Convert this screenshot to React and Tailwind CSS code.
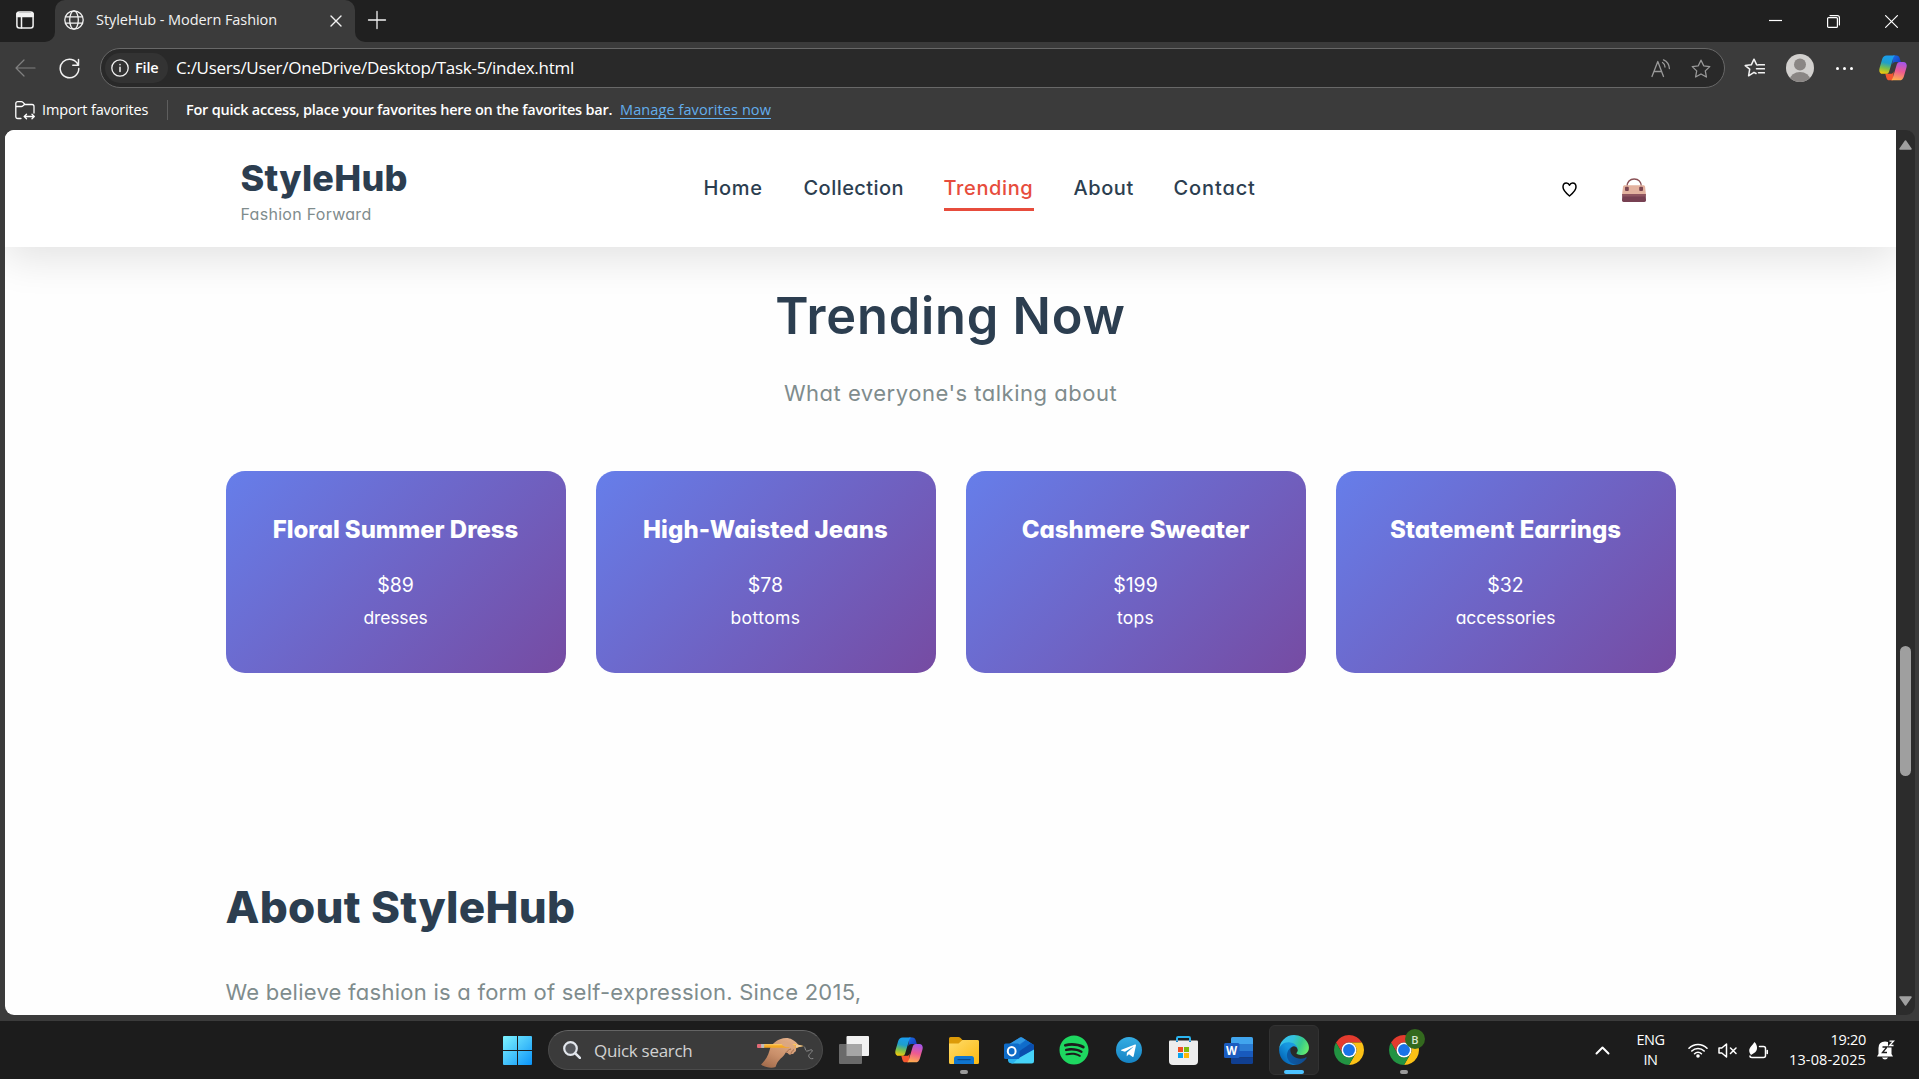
import React from "react";
import { FaSpotify } from "react-icons/fa";

const navLinks = [
  { label: "Home", cls: "w-[60px] tracking-[0.034em]" },
  { label: "Collection", cls: "w-[100px] tracking-[0.0225em]" },
  { label: "Trending", cls: "w-[90px] tracking-[0.031em]", active: true },
  { label: "About", cls: "w-[60px] tracking-[0.028em]" },
  { label: "Contact", cls: "w-[84px] tracking-[0.044em]" },
];

const trending = [
  { name: "Floral Summer Dress", nameCls: "tracking-[-0.002em]", price: "$89", category: "dresses", catCls: "tracking-[-0.008em]" },
  { name: "High-Waisted Jeans", nameCls: "tracking-[0.004em]", price: "$78", category: "bottoms", catCls: "tracking-[0.024em]" },
  { name: "Cashmere Sweater", nameCls: "tracking-[0.001em]", price: "$199", category: "tops", catCls: "tracking-[0.015em]" },
  { name: "Statement Earrings", nameCls: "tracking-[0em]", price: "$32", category: "accessories", catCls: "tracking-[-0.004em]" },
];

function Line({ w, h, vb, sw = 1.3, className = "", children }) {
  return (
    <svg width={w} height={h} viewBox={vb || `0 0 ${w} ${h}`} fill="none" stroke="currentColor" strokeWidth={sw} strokeLinecap="round" strokeLinejoin="round" className={`shrink-0 ${className}`}>
      {children}
    </svg>
  );
}

const STAR = "M10 1.2l2.7 5.6 6.1.8-4.5 4.3 1.1 6.1-5.4-3-5.4 3 1.1-6.1L1.2 7.6l6.1-.8z";

function Copilot({ id, size }) {
  return (
    <svg width={size} height={size * 0.92} viewBox="0 0 28 26" className="shrink-0">
      <defs>
        <linearGradient id={`${id}a`} x1="0.5" y1="0" x2="0.3" y2="1">
          <stop offset="0" stopColor="#1a9df0" />
          <stop offset="0.4" stopColor="#1f9fcb" />
          <stop offset="0.7" stopColor="#7cc04a" />
          <stop offset="1" stopColor="#f6c80a" />
        </linearGradient>
        <linearGradient id={`${id}b`} x1="0.6" y1="0" x2="0.4" y2="1">
          <stop offset="0" stopColor="#a355ea" />
          <stop offset="0.5" stopColor="#ee5a90" />
          <stop offset="1" stopColor="#ffae4d" />
        </linearGradient>
        <linearGradient id={`${id}c`} x1="0" y1="0" x2="1" y2="1">
          <stop offset="0" stopColor="#1b6fe8" />
          <stop offset="1" stopColor="#1535b8" />
        </linearGradient>
      </defs>
      <path d="M14 0.4h3.6c1.7 0 2.6 1 3.1 2.6l1.2 4.1h-5.4c-1.8 0-2.6.8-3.2 2.6z" fill={`url(#${id}c)`} />
      <path d="M14 25.6h-3.6c-1.7 0-2.6-1-3.1-2.6L6.2 18.9h5.3c1.8 0 2.6-.8 3.2-2.600z" fill="#f4562f" />
      <path d="M7.6 0.4h9.2c-1.6.2-2.2 1.4-2.7 3l-3.9 13c-.6 1.9-1.5 2.6-3.2 2.6H3.6C.6 19-.4 16.4.4 13.4l2.7-9.3C3.9 1.6 5.2.4 7.6.4z" fill={`url(#${id}a)`} />
      <path d="M20.4 25.6h-9.2c1.6-.2 2.2-1.4 2.7-3l3.9-13c.6-1.9 1.5-2.6 3.2-2.6h3.4c3 0 4 2.6 3.2 5.6l-2.7 9.3c-.8 2.5-2.1 3.7-4.5 3.7z" fill={`url(#${id}b)`} />
    </svg>
  );
}

function Handbag() {
  return (
    <svg width="24" height="24" viewBox="0 0 24 24">
      <path d="M5 11V8.500C5 4 8 .9 12.200.9S19.300 4 19.300 8.500V11" fill="none" stroke="#8a5257" strokeWidth="1.5" />
      <path d="M2.800 7.200h18.500c1 0 1.700.6 1.800 1.500L24 17H0l1-8.300c.1-.9.800-1.500 1.800-1.500z" fill="#e3b29f" />
      <path d="M.4 16h23.200l.4 6.300c0 1-.6 1.700-1.600 1.700H1.600C.6 24 0 23.300 0 22.300z" fill="#774052" />
      <path d="M.4 16h23.200l.1 2.500H.3z" fill="#8f5560" />
      <rect x="3" y="8.700" width="3.800" height="4.300" rx="1" fill="#7a4450" />
      <rect x="17.200" y="8.700" width="3.800" height="4.300" rx="1" fill="#7a4450" />
    </svg>
  );
}

function WindowsLogo() {
  return (
    <svg width="29" height="29" viewBox="0 0 29 29" className="shrink-0">
      <defs>
        <linearGradient id="win" x1="0" y1="0" x2="29" y2="29" gradientUnits="userSpaceOnUse">
          <stop offset="0" stopColor="#7df3ff" />
          <stop offset="0.5" stopColor="#46c4fb" />
          <stop offset="1" stopColor="#0a93f8" />
        </linearGradient>
      </defs>
      <path d="M1 0h13v14H0V1q0-1 1-1zM15 0h13q1 0 1 1v13H15zM0 15h14v14H1q-1 0-1-1zM15 15h14v13q0 1-1 1H15z" fill="url(#win)" />
    </svg>
  );
}

function HandPencil() {
  return (
    <svg width="58" height="31" viewBox="0 0 58 31" className="shrink-0">
      <defs>
        <linearGradient id="hand" x1="0.8" y1="0" x2="0.2" y2="1">
          <stop offset="0" stopColor="#e3b08a" />
          <stop offset="0.6" stopColor="#c98f6a" />
          <stop offset="1" stopColor="#a46d4d" />
        </linearGradient>
      </defs>
      <path d="M4 27.500C8 24 11 19 12.500 13.500 14 7.500 18 4.500 23 2.300c4-1.800 9-1.800 12 .2 3 1.500 5 3.400 6.400 5.400 1 1.500-1 3-2.500 3.500.5 2 0 3.500-1.600 3.800-.3 1.400-1.500 2.200-2.800 1.700-1 1.300-3 1-3.600-.6l-2.200-.7c-1.700 4-4.700 5.300-7.200 8.300-1.500 1.800-2 3.600-3 6C15 31.500 8 30.500 4 27.500z" fill="url(#hand)" />
      <path d="M29.500 15.500c1-2 2.500-3 4.500-3.500M34 16.500c.5-1.500 1.500-3 3-4" stroke="#9a6546" strokeWidth="0.900" fill="none" />
      <path d="M3 7.300h36l7.500 1.600-7.500 1.900H3z" fill="#f5a824" />
      <path d="M3 7.300h36v1H3z" fill="#ffd06a" />
      <path d="M0 8q0-.9 1-.9h3.200v3.800H1q-1 0-1-.9z" fill="#e26a76" />
      <path d="M4.200 7.100h3v3.800h-3z" fill="#b9bcc4" />
      <path d="M39 7.300l7.500 1.600-7.500 1.900z" fill="#e8c9a0" />
      <path d="M24 5.500c5-2 11 .6 15 4.100-2 2.200-5 2-8 .4-2.500.8-6-1-7-4.500z" fill="#dca780" />
      <path d="M47 9.500c1.500 1 1 4 2.500 4.500 2 .6 4-2 5.500-1 1.800 1.500-3.500 3.500-3.300 6 .2 2 2.300 3.300 4.600 2.500" stroke="#8b8b8b" strokeWidth="1" fill="none" />
    </svg>
  );
}

function TaskView() {
  return (
    <svg width="30" height="28" viewBox="0 0 30 28">
      <rect x="7.500" y="0" width="22.500" height="20" rx="1" fill="#f1f1f1" />
      <rect x="0" y="8" width="23" height="20" rx="1" fill="#6a6a6a" />
      <path d="M7.500 8H23v12H7.500z" fill="#a5a5a5" />
    </svg>
  );
}

function Folder() {
  return (
    <svg width="30" height="27" viewBox="0 0 30 27">
      <defs>
        <linearGradient id="fold" x1="0" y1="0" x2="1" y2="1">
          <stop offset="0" stopColor="#ffdc6b" />
          <stop offset="1" stopColor="#fbb810" />
        </linearGradient>
      </defs>
      <path d="M0 1.500Q0 0 1.500 0h8q1 0 1.800.8L13.500 3H28q2 0 2 2v3H0z" fill="#dc9a08" />
      <path d="M0 6.500h9.500L13.500 3H28.500Q30 3 30 4.500v21q0 1.500-1.500 1.500h-27Q0 27 0 25.500z" fill="url(#fold)" />
      <path d="M5 27v-5.500Q5 19 7.500 19h15q2.500 0 2.500 2.500V27z" fill="#0f75cf" />
      <path d="M8.500 22.600h13" stroke="#084a8c" strokeWidth="1.200" />
    </svg>
  );
}

function Outlook() {
  return (
    <svg width="30" height="27" viewBox="0 0 30 27">
      <path d="M3 8.500L16 .5q1-.6 2 0L30 8v6L14 22H3z" fill="#1b74cf" />
      <path d="M3 8.500L16 .5q1-.6 2 0l4 2.500L8 12z" fill="#2f97e3" />
      <path d="M22 3l5.500 3.400L14 15v-4.500z" fill="#0f6ccb" />
      <path d="M27 6.200L30 8v5L14 22v-7z" fill="#0a4fae" />
      <path d="M30 12.500V24q0 2.500-2.500 2.500H9Q4.500 26 4 22l10-.5z" fill="#46d3f8" />
      <path d="M4 20l10 1.500L9 26.500H7.500Q4 26 4 23z" fill="#2bb3ef" />
      <rect x="0" y="6.500" width="15.500" height="15.500" rx="1.600" fill="#0f6cc8" />
      <ellipse cx="7.700" cy="14.200" rx="3.900" ry="4.200" fill="none" stroke="#fff" strokeWidth="2" />
    </svg>
  );
}

function Telegram() {
  return (
    <svg width="26" height="26" viewBox="0 0 24 24">
      <defs>
        <linearGradient id="tg" x1="0" y1="0" x2="0" y2="1">
          <stop offset="0" stopColor="#35ade3" />
          <stop offset="1" stopColor="#1583c4" />
        </linearGradient>
      </defs>
      <circle cx="12" cy="12" r="12" fill="url(#tg)" />
      <path d="M5 11.700L17.500 6.900c.6-.2 1.100.1.900 1l-2.100 9.900c-.15.7-.6.85-1.150.5l-3.200-2.300-1.500 1.400c-.2.2-.3.3-.6.3l.2-3.200 5.800-5.200c.25-.2-.05-.35-.4-.1L8.300 13.600l-3.200-1c-.6-.2-.65-.6-.1-.9z" fill="#fff" />
    </svg>
  );
}

function Store() {
  return (
    <svg width="29" height="29" viewBox="0 0 29 29">
      <path d="M8 6V2.200Q8 1 9.200 1h10.600Q21 1 21 2.200V6" fill="none" stroke="#2bb5f0" strokeWidth="2" />
      <path d="M0 5.500Q0 4.500 1 4.500h27q1 0 1 1V25q0 4-4 4H4q-4 0-4-4z" fill="#ededed" />
      <path d="M8 4.500V6M21 4.500V6" stroke="#1b83c4" strokeWidth="2" />
      <path d="M9 11h5v5H9z" fill="#f04f23" />
      <path d="M15 11h5v5h-5z" fill="#80ba0a" />
      <path d="M9 17h5v5H9z" fill="#08a3ee" />
      <path d="M15 17h5v5h-5z" fill="#fdb809" />
    </svg>
  );
}

function Word() {
  return (
    <span className="relative block h-[27px] w-[29px]">
      <svg width="29" height="27" viewBox="0 0 29 27">
        <path d="M7 1.500Q7 0 8.500 0h19Q29 0 29 1.500V7H7z" fill="#41a5ee" />
        <path d="M7 7h22v7H7z" fill="#2b7cd3" />
        <path d="M7 14h22v6.500H7z" fill="#185abd" />
        <path d="M7 20.500h22v5q0 1.500-1.500 1.500h-19Q7 27 7 25.500z" fill="#103f91" />
        <rect x="0" y="6" width="15.500" height="15" rx="1.500" fill="#1b5cc0" />
      </svg>
      <span className="absolute left-0 top-[6px] w-[15px] text-center text-[11.5px] font-bold leading-[15px] text-white">W</span>
    </span>
  );
}

function Edge() {
  return (
    <svg width="30" height="30" viewBox="4 4 257 257">
      <defs>
        <linearGradient id="e1" x1="0.2" y1="0.5" x2="1" y2="0.5">
          <stop offset="0" stopColor="#0c59a4" />
          <stop offset="1" stopColor="#114a8b" />
        </linearGradient>
        <linearGradient id="e2" x1="0.9" y1="0.2" x2="0.3" y2="0.9">
          <stop offset="0" stopColor="#1b9de2" />
          <stop offset="0.4" stopColor="#1595df" />
          <stop offset="1" stopColor="#0668b8" />
        </linearGradient>
        <linearGradient id="e3" x1="0" y1="0.3" x2="1" y2="0.6">
          <stop offset="0" stopColor="#35c1f1" />
          <stop offset="0.4" stopColor="#34c1dd" />
          <stop offset="0.7" stopColor="#36c98d" />
          <stop offset="1" stopColor="#66eb6e" />
        </linearGradient>
      </defs>
      <path fill="url(#e1)" d="M235.680 195.460a93.730 93.730 0 0 1-10.540 4.710 101.870 101.870 0 0 1-35.900 6.460c-47.320 0-88.540-32.550-88.540-74.320A31.480 31.480 0 0 1 117.130 105.020c-42.800 1.800-53.800 46.400-53.800 72.530 0 73.880 68.090 81.370 82.760 81.370 7.910 0 19.840-2.300 27-4.560l1.310-.44a128.340 128.340 0 0 0 66.600-52.800 4 4 0 0 0-5.320-5.660z" />
      <path fill="url(#e2)" d="M110.340 246.340A79.200 79.200 0 0 1 87.600 225a80.720 80.720 0 0 1 29.530-120c3.120-1.470 8.450-4.130 15.540-4a32.350 32.350 0 0 1 25.690 13 31.880 31.880 0 0 1 6.360 18.660c0-.21 24.460-79.600-80-79.600-43.900 0-80 41.660-80 78.210a130.150 130.150 0 0 0 12.110 56 128 128 0 0 0 156.380 67.110 75.550 75.550 0 0 1-62.780-8z" />
      <path fill="url(#e3)" d="M156.940 153.780c-.81 1.050-3.300 2.500-3.300 5.660 0 2.610 1.700 5.120 4.720 7.230 14.380 10 41.490 8.680 41.560 8.680a59.560 59.560 0 0 0 30.270-8.350A61.380 61.380 0 0 0 260.500 114c.26-22.410-8-37.310-11.340-43.910C227.950 28.760 182.350 5 132.720 5A128 128 0 0 0 4.720 131.200c.48-36.540 36.800-66.050 80-66.050 3.500 0 23.460.34 42 10.070 16.340 8.580 24.900 18.940 30.850 29.210 6.180 10.670 7.280 24.150 7.280 29.520s-2.740 13.330-7.910 19.830z" />
    </svg>
  );
}

function Chrome() {
  return (
    <svg width="30" height="30" viewBox="2 2 44 44">
      <path d="M4.950 13A22 22 0 0 1 43.050 13H24A11 11 0 0 0 14.470 29.500z" fill="#e33b2e" />
      <path d="M43.050 13A22 22 0 0 1 24 46L33.530 29.500A11 11 0 0 0 24 13z" fill="#fbc116" />
      <path d="M24 46A22 22 0 0 1 4.950 13L14.470 29.500A11 11 0 0 0 33.530 29.500z" fill="#229342" />
      <circle cx="24" cy="24" r="11" fill="#fff" />
      <circle cx="24" cy="24" r="8.700" fill="#1a73e8" />
    </svg>
  );
}

function Slot({ children, running, active }) {
  return (
    <div className="relative flex h-[58px] w-[55px] shrink-0 items-center justify-center">
      {active ? (
        <div className="flex h-[50px] w-[50px] items-center justify-center rounded-md border border-[#323232] bg-[#292929]">{children}</div>
      ) : (
        children
      )}
      {running && <span className="absolute bottom-[5px] left-1/2 h-1 w-2 -translate-x-1/2 rounded-full bg-[#9a9a9a]" />}
      {active && <span className="absolute bottom-[5px] left-1/2 h-1 w-5 -translate-x-1/2 rounded-full bg-[#4cc2ff]" />}
    </div>
  );
}

function TitleBar() {
  return (
    <div className="flex h-[42px] bg-[#202020] text-[#f2f2f2]">
      <div className="flex w-[55px] bg-[#3b3b3b]">
        <div className="flex w-full rounded-br-[10px] bg-[#202020] pl-4 pt-[11px]">
          <Line w={18} h={18} sw={1.5}>
            <rect x="0.900" y="0.900" width="16.200" height="16.200" rx="2.500" />
            <path d="M1 2.500h16v3H1z" fill="currentColor" />
            <path d="M5.500 5v12" />
          </Line>
        </div>
      </div>
      <div className="flex h-[42px] w-[300px] bg-[#202020]">
        <div className="flex w-full rounded-t-[10px] bg-[#3b3b3b] pl-[9px]">
          <Line w={20} h={20} sw={1.3} className="mt-[10px]">
            <circle cx="10" cy="10" r="9.200" />
            <ellipse cx="10" cy="10" rx="4.300" ry="9.200" />
            <path d="M1.500 6.800h17M1.500 13.200h17" />
          </Line>
          <span className="ml-3 mt-[9px] whitespace-nowrap text-[14.5px] leading-[21px] tracking-[-0.005em]">StyleHub - Modern Fashion</span>
          <Line w={12} h={12} sw={1.4} className="ml-[53px] mt-[15px]">
            <path d="M1 1l10 10M11 1L1 11" />
          </Line>
        </div>
      </div>
      <div className="w-[22px] bg-[#3b3b3b]">
        <div className="h-full w-full rounded-bl-[10px] bg-[#202020] pl-[13px] pt-[11px]">
          <Line w={18} h={18} sw={1.3} className="overflow-visible">
            <path d="M9 0.500v17M0.500 9h17" />
          </Line>
        </div>
      </div>
      <div className="ml-auto flex pr-[21px] text-white">
        <Line w={13} h={13} sw={1.2} className="mt-[14px]"><path d="M0 6.500h13" strokeLinecap="butt" /></Line>
        <Line w={13} h={13} sw={1.2} className="ml-[45px] mt-[15px]">
          <rect x="0.600" y="2.600" width="9.800" height="9.800" rx="1" />
          <path d="M3 .6h7.400q2 0 2 2V10" />
        </Line>
        <Line w={13} h={13} sw={1.2} className="ml-[45px] mt-[15px]"><path d="M.6.6l11.800 11.800M12.400.6L.6 12.400" /></Line>
      </div>
    </div>
  );
}

function Toolbar() {
  return (
    <div className="flex h-[52px] items-center text-[#f2f2f2]">
      <Line w={21} h={18} sw={1.2} className="ml-[15px] text-[#808080]">
        <path d="M20 9H1M9 1L1 9l8 8" />
      </Line>
      <Line w={21} h={21} sw={1.5} className="ml-[23px]">
        <path d="M19.200 7.200A9.300 9.300 0 1 0 19.800 10.500M19.500 1.500v5.700h-5.700" />
      </Line>
      <div className="ml-5 flex h-10 w-[1625px] items-center rounded-full border border-[#686868] bg-[#292929]">
        <div className="ml-1 flex h-[30px] w-[63px] items-center rounded-full bg-[#333333] pl-[6px]">
          <Line w={18} h={18} sw={1.3}>
            <circle cx="9" cy="9" r="8.200" />
            <path d="M9 8.200v4.300M9 5.600v.1" strokeWidth="1.500" />
          </Line>
          <span className="ml-[6px] text-[14.5px] font-semibold leading-5 tracking-[-0.013em] text-white">File</span>
        </div>
        <span className="ml-[8px] whitespace-nowrap text-[17px] leading-6 tracking-[-0.0155em] text-white">C:/Users/User/OneDrive/Desktop/Task-5/index.html</span>
        <Line w={20} h={19} sw={1.3} className="ml-auto text-[#9a9a9a]">
          <path d="M1 17.500L6.800 2.500l5.700 15M3 12.500h7.600M11.500 3.500c1.700 1 2.500 2.500 2.500 4.500M12.500.8c3.500 1.500 5.700 4.500 5.900 8.700" />
        </Line>
        <Line w={20} h={19} sw={1.3} className="ml-[20px] mr-[13px] text-[#9a9a9a]"><path d={STAR} /></Line>
      </div>
      <Line w={21} h={20} sw={1.5} className="ml-[19px]">
        <path d="M12 15.500l-2-1.200-5.400 3.500 1.100-6.600L1.200 7.600l6.100-.8L10 1.200l2.700 5.600 1.300.2M14.500 6.800h6M12.500 10.800h8M14.500 14.800h6" />
      </Line>
      <svg width="28" height="28" viewBox="0 0 28 28" className="ml-[21px] shrink-0">
        <defs><clipPath id="av"><circle cx="14" cy="14" r="14" /></clipPath></defs>
        <g clipPath="url(#av)">
          <path d="M0 0h28v28H0z" fill="#d2d0ce" />
          <circle cx="14" cy="10.500" r="6" fill="#8a8684" />
          <ellipse cx="14" cy="25.500" rx="10" ry="7.500" fill="#8a8684" />
        </g>
      </svg>
      <div className="ml-[22px] flex gap-[4px]">
        <span className="h-[3px] w-[3px] rounded-full bg-white" />
        <span className="h-[3px] w-[3px] rounded-full bg-white" />
        <span className="h-[3px] w-[3px] rounded-full bg-white" />
      </div>
      <div className="ml-[26px] shrink-0"><Copilot id="tb" size={28} /></div>
    </div>
  );
}

function FavoritesBar() {
  return (
    <div className="flex h-9 items-center pb-[4px] text-[14.5px] leading-5 text-white">
      <Line w={20} h={19} sw={1.3} className="ml-[15px]">
        <path d="M6 17.500H2.800q-2 0-2-2v-13q0-1.800 2-1.800h3.500q1 0 1.700.7l2 2.100h7q2 0 2 2v6.500M.8 5.500h5.500q1 0 1.700-.7l1.500-1.300M9.500 15.500h9.500M11.500 13.200l-2.300 2.300 2.300 2.300M17 13.200l2.300 2.300-2.300 2.300" />
      </Line>
      <span className="ml-[7px] w-[106px] whitespace-nowrap tracking-[-0.010em]">Import favorites</span>
      <span className="ml-[19px] h-5 w-px bg-[#5e5e5e]" />
      <span className="ml-[18px] w-[434px] whitespace-nowrap font-semibold tracking-[-0.0160em]">For quick access, place your favorites here on the favorites bar.</span>
      <span className="whitespace-nowrap border-b border-[#63aeed] leading-[17px] tracking-[0.0064em] text-[#63aeed]">Manage favorites now</span>
    </div>
  );
}

function SiteHeader() {
  return (
    <header className="h-[117px] shrink-0 bg-white shadow-[0_12px_38px_rgba(0,0,0,0.11)]">
      <div className="mx-auto flex w-[1450px] items-start pl-[15px]">
        <div className="mt-[28px] w-[463px]">
          <div className="text-[36px] font-extrabold leading-10 tracking-[0.007em] text-[#2c3e50]">StyleHub</div>
          <div className="mt-px text-[16px] leading-[30px] tracking-[0.018em] text-[#7f8c8d]">Fashion Forward</div>
        </div>
        <nav className="mt-[43px] flex gap-10 text-[20px] font-medium leading-[30px]">
          {navLinks.map((l) => (
            <a key={l.label} className={`whitespace-nowrap pb-[5px] ${l.cls} ${l.active ? "border-b-[3px] border-[#e74c3c] text-[#e74c3c]" : "text-[#2c3e50]"}`}>
              {l.label}
            </a>
          ))}
        </nav>
        <Line w={15} h={15} sw={1.5} className="ml-[304px] mt-[52px] text-black">
          <path d="M7.500 14C4 11.200 1 8.500 1 5.100 1 2.700 2.500 1.100 4.400 1.100c1.400 0 2.500.8 3.100 2.200.6-1.400 1.700-2.200 3.100-2.200 1.900 0 3.400 1.600 3.400 4 0 3.400-3 6.100-6.500 8.900z" />
        </Line>
        <span className="ml-[45px] mt-12 block"><Handbag /></span>
      </div>
    </header>
  );
}

function Page() {
  return (
    <div className="flex h-[885px] w-[1891px] flex-col overflow-hidden rounded-l-[9px] bg-[#fefefe] font-['Inter',sans-serif] [font-feature-settings:'cv11']">
      <SiteHeader />
      <section className="mx-auto w-[1450px] shrink-0 pt-[39px] text-center">
        <h2 className="text-[50.5px] font-semibold leading-[60px] tracking-[0.016em] text-[#2c3e50]">Trending Now</h2>
        <p className="mt-8 text-[22px] leading-[30px] tracking-[0.023em] text-[#7f8c8d]">What everyone's talking about</p>
        <div className="mt-[63px] grid grid-cols-4 gap-[30px]">
          {trending.map((t) => (
            <article key={t.name} className="h-[202px] rounded-[19px] bg-[linear-gradient(135deg,#667eea_0%,#764ba2_100%)] pt-[42px] text-white">
              <h3 className={`whitespace-nowrap text-[24px] font-extrabold leading-[34px] ${t.nameCls}`}>{t.name}</h3>
              <p className="mt-[23px] text-[19.5px] leading-[30px]">{t.price}</p>
              <p className={`mt-[5px] text-[17.5px] leading-[26px] ${t.catCls}`}>{t.category}</p>
            </article>
          ))}
        </div>
      </section>
      <section className="mx-auto mt-[207px] w-[1450px] shrink-0">
        <h2 className="text-[44px] font-extrabold leading-[54px] tracking-[0.007em] text-[#2c3e50]">About StyleHub</h2>
        <p className="mt-[38px] text-[22px] leading-10 tracking-[0.0113em] text-[#7f8c8d]">We believe fashion is a form of self-expression. Since 2015,</p>
      </section>
    </div>
  );
}

function ScrollBar() {
  return (
    <div className="flex h-[885px] w-[19px] flex-col items-center rounded-r-[9px] bg-[#2c2c2c] text-[#a0a0a0]">
      <svg width="13" height="10" viewBox="0 0 13 10" className="mt-[10px]"><path d="M6.500 1L12 9H1z" fill="currentColor" stroke="currentColor" strokeWidth="1.500" strokeLinejoin="round" /></svg>
      <div className="mt-[496px] h-[130px] w-[11px] rounded-full bg-[#9f9f9f]" />
      <svg width="13" height="10" viewBox="0 0 13 10" className="mt-[220px]"><path d="M6.500 9L12 1H1z" fill="currentColor" stroke="currentColor" strokeWidth="1.500" strokeLinejoin="round" /></svg>
    </div>
  );
}

function Taskbar() {
  return (
    <div className="flex h-[58px] items-center bg-[#1c1c1c] pl-[503px] text-white">
      <WindowsLogo />
      <div className="ml-4 mr-[3px] flex h-10 w-[275px] shrink-0 items-center rounded-full border border-[#4b4b4b] border-t-[#646464] bg-[#3b3b3b]">
        <Line w={18} h={18} sw={2.2} className="ml-[14px] text-[#e2e6ec]">
          <circle cx="7.500" cy="7.500" r="6.300" fill="#55575c" />
          <path d="M12.300 12.300l4.600 4.600" strokeWidth="2.600" />
        </Line>
        <span className="ml-[13px] mt-px whitespace-nowrap text-[17px] leading-6 tracking-[-0.018em] text-[#d2d2d2]">Quick search</span>
        <div className="ml-auto mr-[7px] mt-1"><HandPencil /></div>
      </div>
      <Slot><TaskView /></Slot>
      <Slot><Copilot id="tk" size={28} /></Slot>
      <Slot running><Folder /></Slot>
      <Slot><Outlook /></Slot>
      <Slot><FaSpotify size={30} color="#1ed760" /></Slot>
      <Slot><Telegram /></Slot>
      <Slot><Store /></Slot>
      <Slot><Word /></Slot>
      <Slot active><Edge /></Slot>
      <Slot><Chrome /></Slot>
      <Slot running>
        <Chrome />
        <span className="absolute left-[29px] top-[8px] flex h-5 w-5 items-center justify-center rounded-full bg-[#33691e] text-[11px] font-semibold leading-none text-[#d8e4d0]">B</span>
      </Slot>
      <Line w={15} h={9} sw={2} className="ml-[164px]"><path d="M1.500 7.500l6-6 6 6" /></Line>
      <div className="ml-[20px] w-[41px] text-center text-[14.5px] leading-5 tracking-[-0.03em]">
        <div>ENG</div>
        <div>IN</div>
      </div>
      <Line w={20} h={16} sw={1.6} className="ml-[17px]">
        <path d="M1 6.200a12.700 12.700 0 0 1 18 0M3.800 9a8.800 8.800 0 0 1 12.400 0M6.600 11.700a4.800 4.800 0 0 1 6.800 0" />
        <circle cx="10" cy="14" r="1" fill="currentColor" />
      </Line>
      <Line w={20} h={15} sw={1.5} className="ml-[10px]">
        <path d="M1 5v5h2.800L8.500 14V1L3.800 5zM12.500 5l5.500 5.500M18 5l-5.500 5.500" />
      </Line>
      <Line w={21} h={17} sw={1.5} className="ml-[10px]">
        <path d="M11.500 4.500h4q2 0 2 2v7q0 2-2 2H4q-2 0-2-1.500M19.300 8.500v3" />
        <path d="M2 11.500C-.5 6.500 3.500 4.500 6.500 0c3.500 3.500 3.500 9-.8 11.300L3 13z" fill="currentColor" stroke="none" />
      </Line>
      <div className="ml-[18px] w-[79px] text-right text-[14.5px] leading-5">
        <div className="tracking-[-0.02em]">19:20</div>
        <div className="tracking-[0.009em]">13-08-2025</div>
      </div>
      <svg width="18" height="20" viewBox="0 0 18 20" className="ml-[11px] shrink-0">
        <path d="M1.500 14V8Q1.500 1.500 8 1.500q2 0 3 .6V7.500h3.500V14l1.500 2.500H0zM5 17.500h6q-.8 2-3 2t-3-2z" fill="#fff" />
        <path d="M5.500 7h4.500L5.500 12.500H10" stroke="#1c1c1c" strokeWidth="1.400" fill="none" />
        <path d="M12.500 1.200h4l-4 4.300h4" stroke="#fff" strokeWidth="1.300" fill="none" />
      </svg>
    </div>
  );
}

export default function App() {
  return (
    <div className="h-[1079px] w-[1919px] overflow-hidden bg-[#3b3b3b] font-['Open_Sans',sans-serif]">
      <TitleBar />
      <Toolbar />
      <FavoritesBar />
      <div className="mb-[6px] flex pl-[5px]">
        <Page />
        <ScrollBar />
      </div>
      <Taskbar />
    </div>
  );
}
